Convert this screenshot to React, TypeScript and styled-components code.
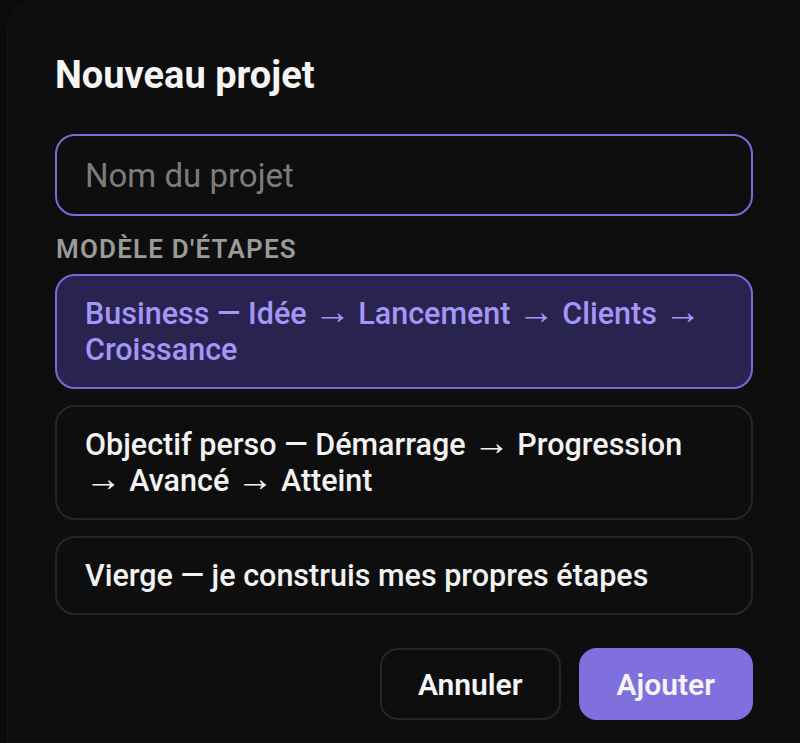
import React, { useState } from 'react';
import styled, { createGlobalStyle } from 'styled-components';

const GlobalStyle = createGlobalStyle`
html, body {
  margin: 0;
  padding: 0;
  background-color: #0b0b0b;
  font-family: Roboto, "Liberation Sans", Arial, sans-serif;
}
* {
  box-sizing: border-box;
}
`

const Modal = styled.div`
  margin-left: 7px;
  min-height: 743px;
  background-color: #0e0e0e;
  border-left: 1px solid #151515;
  border-top-left-radius: 30px;
  padding: 52px 47px 20px 47px;
  display: flex;
  flex-direction: column;
`
const Title = styled.h2`
  margin: 0 0 36px 0;
  font-size: 38px;
  font-weight: 700;
  line-height: 46px;
  color: #f5f5f5;
`
const NameInput = styled.input`
  width: 100%;
  height: 82px;
  border: 2.5px solid #7b6bd8;
  border-radius: 20px;
  background-color: #0e0e0e;
  padding: 0 28px;
  font-family: inherit;
  font-size: 33px;
  color: #eee;
  outline: none;
  &::placeholder {
    color: #7c7c7c;
  }
`
const SectionLabel = styled.div`
  margin: 18px 0 10px 1px;
  font-size: 26px;
  font-weight: 600;
  letter-spacing: 1.2px;
  text-transform: uppercase;
  color: #9a9a9a;
  line-height: 30px;
`
const OptionList = styled.div`
  display: flex;
  flex-direction: column;
  gap: 16px;
`
const Option = styled.button<{ selected: boolean }>`
  width: 100%;
  text-align: left;
  padding: 19.5px 44px 19.5px 28px;
  border-radius: 20px;
  border: 2px solid ${({ selected }) => (selected ? '#7a68d8' : '#262626')};
  background-color: ${({ selected }) => (selected ? '#292350' : '#0e0e0e')};
  color: ${({ selected }) => (selected ? '#a496f7' : '#f2f2f2')};
  font-family: inherit;
  font-size: 30.5px;
  font-weight: 500;
  line-height: 36px;
  cursor: pointer;
`
const Arrow = styled.span`
  font-family: "Liberation Sans", sans-serif;
  font-size: 1.2em;
  font-weight: 400;
  line-height: 0;
`
const Actions = styled.div`
  display: flex;
  justify-content: flex-end;
  gap: 18px;
  margin-top: 33px;
`
const ActionButton = styled.button<{ primary?: boolean }>`
  height: 72px;
  padding: 0 36px;
  border-radius: 18px;
  border: 2px solid ${({ primary }) => (primary ? '#8070dd' : '#262626')};
  background-color: ${({ primary }) => (primary ? '#8070dd' : '#0e0e0e')};
  color: #f5f5f5;
  font-family: inherit;
  font-size: 30px;
  font-weight: 600;
  cursor: pointer;
`

const templates = [
  'Business — Idée → Lancement → Clients → Croissance',
  'Objectif perso — Démarrage → Progression → Avancé → Atteint',
  'Vierge — je construis mes propres étapes',
];

// arrows get their own font so they come out long and thin
const withArrows = (text: string) =>
  text.split('→').map((part, i) => (
    <React.Fragment key={i}>
      {i > 0 && <Arrow>→</Arrow>}
      {part}
    </React.Fragment>
  ));

const App = () => {
  const [ selected, setSelected ] = useState(0);
  return (
    <>
      <GlobalStyle />
      <Modal>
        <Title>Nouveau projet</Title>
        <NameInput placeholder="Nom du projet" />
        <SectionLabel>Modèle d'étapes</SectionLabel>
        <OptionList>
          {templates.map((t, i) => (
            <Option key={i} selected={selected === i} onClick={() => setSelected(i)}>{withArrows(t)}</Option>
          ))}
        </OptionList>
        <Actions>
          <ActionButton>Annuler</ActionButton>
          <ActionButton primary>Ajouter</ActionButton>
        </Actions>
      </Modal>
    </>
  )
}

export default App;
